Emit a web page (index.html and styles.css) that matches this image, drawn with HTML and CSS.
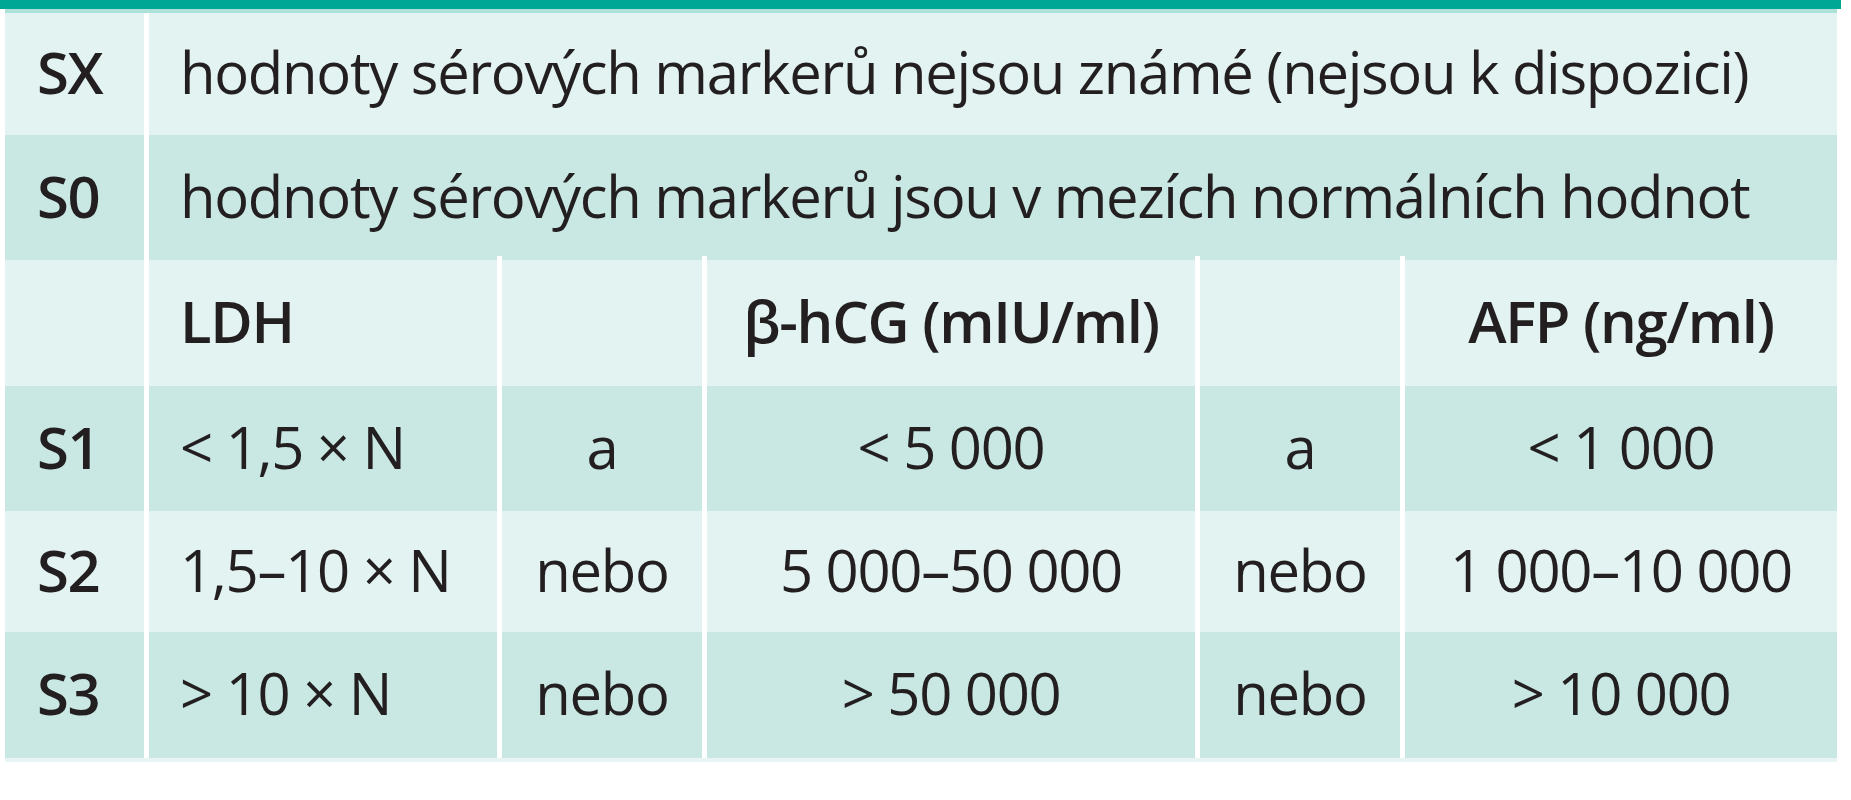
FILE: index.html
```html
<!DOCTYPE html>
<html lang="cs">
<head>
<meta charset="utf-8">
<title>Sérové markery</title>
<link rel="stylesheet" href="styles.css">
</head>
<body>
<div class="page">
  <div class="topbar"></div>
  <div class="grid">
    <div class="cell label light">SX</div>
    <div class="cell text light span">hodnoty sérových markerů nejsou známé (nejsou k dispozici)</div>

    <div class="cell label dark">S0</div>
    <div class="cell text dark span">hodnoty sérových markerů jsou v mezích normálních hodnot</div>

    <div class="cell label light"></div>
    <div class="cell text light head">LDH</div>
    <div class="cell center light ext"></div>
    <div class="cell center light head ext">β-hCG (mIU/ml)</div>
    <div class="cell center light ext"></div>
    <div class="cell center light head ext">AFP (ng/ml)</div>

    <div class="cell label dark">S1</div>
    <div class="cell text dark">&lt; 1,5 × N</div>
    <div class="cell center dark">a</div>
    <div class="cell center dark">&lt; 5 000</div>
    <div class="cell center dark">a</div>
    <div class="cell center dark">&lt; 1 000</div>

    <div class="cell label light">S2</div>
    <div class="cell text light">1,5–10 × N</div>
    <div class="cell center light">nebo</div>
    <div class="cell center light">5 000–50 000</div>
    <div class="cell center light">nebo</div>
    <div class="cell center light">1 000–10 000</div>

    <div class="cell label dark">S3</div>
    <div class="cell text dark">&gt; 10 × N</div>
    <div class="cell center dark">nebo</div>
    <div class="cell center dark">&gt; 50 000</div>
    <div class="cell center dark">nebo</div>
    <div class="cell center dark">&gt; 10 000</div>
  </div>
</div>
</body>
</html>
```

FILE: styles.css
```css
html, body {
  margin: 0;
  padding: 0;
  background: #ffffff;
}

.page {
  font-family: "Open Sans", "Noto Sans", "DejaVu Sans", sans-serif;
  font-size: 58px;
  letter-spacing: -1.3px;
  color: #231f20;
}

.topbar {
  width: 1841px;
  height: 9px;
  background: #00a794;
}

.grid {
  margin-left: 5px;
  width: 1832px;
  display: grid;
  grid-template-columns: 139px 348px 200px 488px 200px 432px;
  grid-template-rows: 122px 125px 126px 125px 121px 126px;
  column-gap: 5px;
  row-gap: 0;
  background: #ffffff;
  border-top: 4px solid #ade0d8;
  border-bottom: 4px solid #e8f5f4;
}

.cell {
  display: flex;
  align-items: center;
  white-space: nowrap;
  line-height: 1;
  padding-bottom: 4px;
  box-sizing: border-box;
  position: relative;
}

.light { background: #e2f3f1; }
.dark  { background: #c9e8e4; }

.label {
  font-weight: 600;
  padding-left: 32px;
}

.text {
  padding-left: 31px;
}

.span {
  grid-column: 2 / -1;
}

.center {
  justify-content: center;
}

.head {
  font-weight: 600;
}

.ext::before {
  content: "";
  position: absolute;
  left: -5px;
  top: -4px;
  width: 5px;
  height: 4px;
  background: #ffffff;
}
```
